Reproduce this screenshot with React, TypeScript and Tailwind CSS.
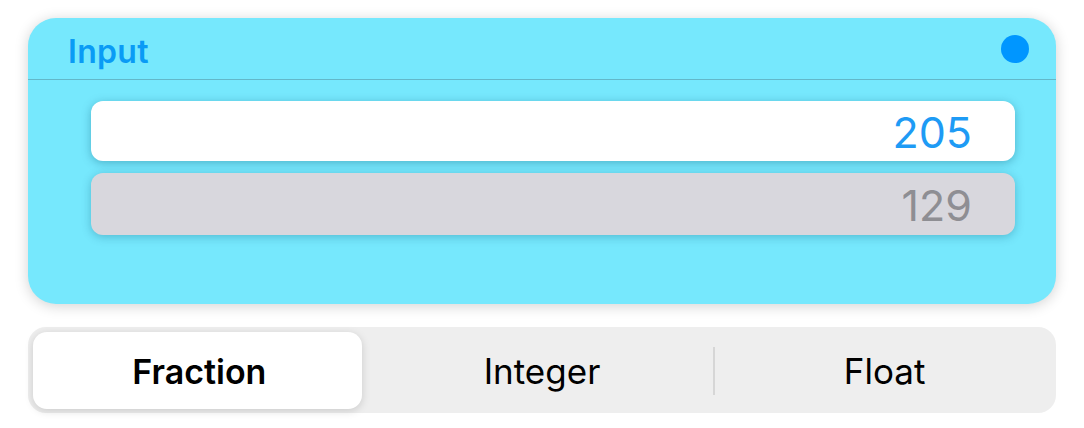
import React from 'react';

const font = { fontFamily: 'Inter, "Noto Sans", sans-serif' };

const segments = ['Fraction', 'Integer', 'Float'];

export default function App() {
  const selected = 0;
  return (
    <div className="w-[1084px] h-[428px] bg-white pt-[18px] px-[28px]" style={font}>
      {/* input card */}
      <div className="h-[286px] rounded-[28px] bg-[#76e8fd] shadow-[0_2px_14px_rgba(0,0,0,0.18)] overflow-hidden">
        <div className="h-[62px] flex items-center justify-between pl-[40px] pr-[27px] border-b border-[#62b8c9]">
          <span className="text-[32px] font-semibold text-[#0a9bf5] tracking-[0.3px] pt-[6px]">Input</span>
          <span className="w-[28px] h-[28px] rounded-full bg-[#0096ff]" />
        </div>
        <div className="pl-[63px] pr-[41px] pt-[21px] flex flex-col gap-[12px]">
          <div className="h-[60px] rounded-[12px] bg-white shadow-[0_2px_10px_rgba(0,80,110,0.35)] flex items-center justify-end pr-[43px]">
            <span className="text-[43px] leading-none text-[#1e9bf5] font-normal pt-[3px]">205</span>
          </div>
          <div className="h-[62px] rounded-[12px] bg-[#d8d7dd] shadow-[0_2px_10px_rgba(0,80,110,0.3)] flex items-center justify-end pr-[43px]">
            <span className="text-[43px] leading-none text-[#8e8e93] font-normal pt-[3px]">129</span>
          </div>
        </div>
      </div>

      {/* segmented control */}
      <div className="mt-[23px] h-[86px] rounded-[18px] bg-[#eeeeee] grid grid-cols-3">
        {segments.map((s, i) => (
          <div key={s} className="relative flex items-center justify-center">
            {i === selected && (
              <div className="absolute left-[5px] right-[9px] top-[5px] bottom-[4px] rounded-[14px] bg-white shadow-[0_2px_8px_rgba(0,0,0,0.15)]" />
            )}
            {i === 2 && (
              <div className="absolute left-0 top-[20px] bottom-[18px] w-[2px] bg-[#d6d6d6]" />
            )}
            <span
              className={`relative text-black pt-[2px] ${i === selected ? 'text-[34px] font-semibold' : 'text-[35px] font-normal'}`}
            >
              {s}
            </span>
          </div>
        ))}
      </div>
    </div>
  );
}
